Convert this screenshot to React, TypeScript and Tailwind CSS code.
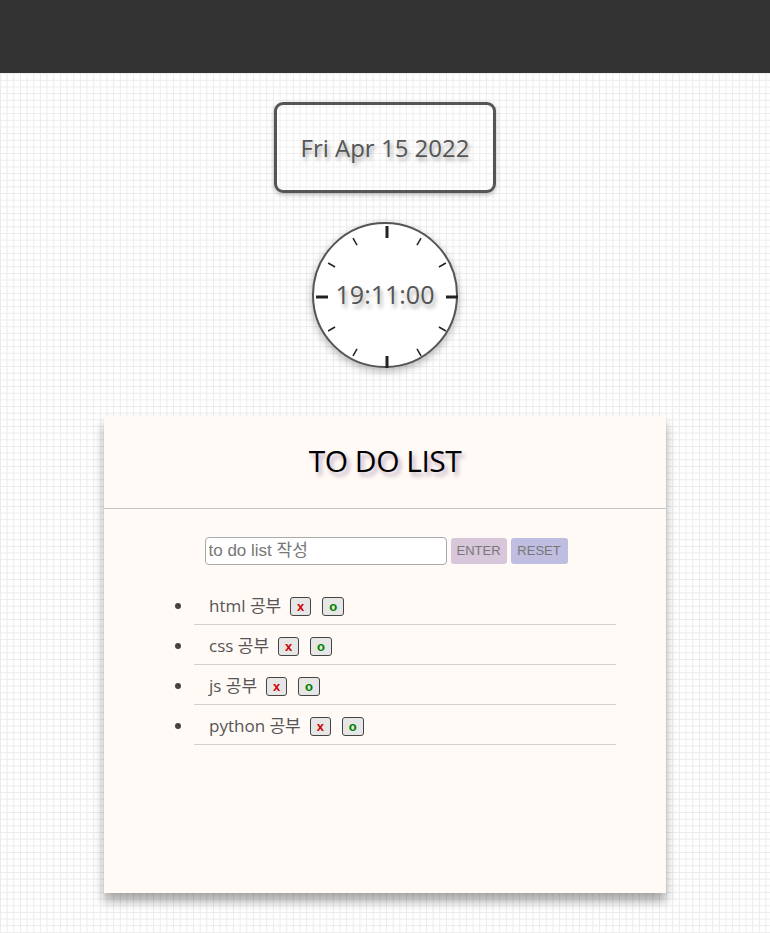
import React from "react";

const todos = ["html 공부", "css 공부", "js 공부", "python 공부"];

function ClockFace() {
  const ticks = Array.from({ length: 12 }, (_, i) => i);
  return (
    <svg width="146" height="146" viewBox="-73 -73 146 146" className="absolute inset-0">
      {ticks.map((i) => {
        const major = i % 3 === 0;
        const a = (i * Math.PI) / 6;
        const r1 = major ? 71 : 68;
        const r2 = major ? 59 : 60;
        return (
          <line
            key={i}
            x1={Math.sin(a) * r1}
            y1={-Math.cos(a) * r1}
            x2={Math.sin(a) * r2}
            y2={-Math.cos(a) * r2}
            stroke="#222"
            strokeWidth={major ? 3 : 1.5}
          />
        );
      })}
    </svg>
  );
}

export default function App() {
  return (
    <div
      className="min-h-[933px] w-full bg-white bg-[linear-gradient(to_right,#ebebeb_1px,transparent_1px),linear-gradient(to_bottom,#ebebeb_1px,transparent_1px)] bg-[size:6.67px_6.67px] font-['Open_Sans','Noto_Sans_CJK_KR',sans-serif]"
    >
      <header className="h-[73px] w-full bg-[#333333]" />

      <main className="flex flex-col items-center pb-10">
        <div className="mt-[29px] flex h-[91px] w-[222px] items-center justify-center rounded-[9px] border-[3px] border-[#555] bg-white/20 shadow-[0_2px_5px_rgba(0,0,0,0.25)]">
          <span className="text-[24px] font-medium text-[#555] [text-shadow:2px_3px_4px_rgba(0,0,0,0.35)]">
            Fri Apr 15 2022
          </span>
        </div>

        <div className="relative mt-[29px] flex h-[146px] w-[146px] items-center justify-center rounded-full border-2 border-[#555] bg-white shadow-[0_3px_8px_rgba(0,0,0,0.3)]">
          <ClockFace />
          <span className="relative text-[25px] font-medium text-[#555] [text-shadow:2px_4px_4px_rgba(0,0,0,0.35)]">
            19:11:00
          </span>
        </div>

        <section className="mt-[48px] flex h-[477px] w-[562px] flex-col bg-[#fffaf5] shadow-[0_8px_10px_rgba(0,0,0,0.35)]">
          <div className="flex h-[93px] items-center justify-center border-b border-[#c8c4c4] pb-1">
            <h1 className="text-[30px] tracking-[-0.5px] text-black [text-shadow:3px_4px_4px_rgba(110,70,130,0.45)] font-['Open_Sans',sans-serif]">
              TO DO LIST
            </h1>
          </div>

          <div className="mt-[28px] flex items-center justify-center gap-[4px] pl-[2px] font-['Liberation_Sans',Arial,'Noto_Sans_CJK_KR',sans-serif]">
            <input
              placeholder="to do list 작성"
              className="h-[28px] w-[242px] rounded-[4px] border border-[#aaa] bg-white px-[3px] text-[17px] text-[#333] placeholder:text-[#777] outline-none"
            />
            <button className="h-[26px] w-[56px] rounded-[3px] bg-[#d8c6da] text-[13px] text-[#777]">ENTER</button>
            <button className="h-[26px] w-[57px] rounded-[3px] bg-[#bfbde0] text-[13px] text-[#777]">RESET</button>
          </div>

          <ul className="mx-auto mt-[20px] w-[462px] list-disc pl-[40px] text-[#444] marker:text-[#444]">
            {todos.map((t) => (
              <li key={t} className="h-[40px] border-b border-[#d4d0cc] pl-[15px] pt-[8px] text-[17px]">
                <span className="text-[#555]">{t}</span>
                <button className="ml-[9px] inline-flex h-[19px] w-[21px] items-center justify-center rounded-[3px] border border-[#444] bg-[#e6e6e6] align-[1px] text-[13px] font-bold leading-none text-[#d00000] font-['Liberation_Sans',Arial,sans-serif]">
                  x
                </button>
                <button className="ml-[11px] inline-flex h-[19px] w-[22px] items-center justify-center rounded-[3px] border border-[#444] bg-[#e6e6e6] align-[1px] text-[13px] font-bold leading-none text-[#008000] font-['Liberation_Sans',Arial,sans-serif]">
                  o
                </button>
              </li>
            ))}
          </ul>
        </section>
      </main>
    </div>
  );
}
